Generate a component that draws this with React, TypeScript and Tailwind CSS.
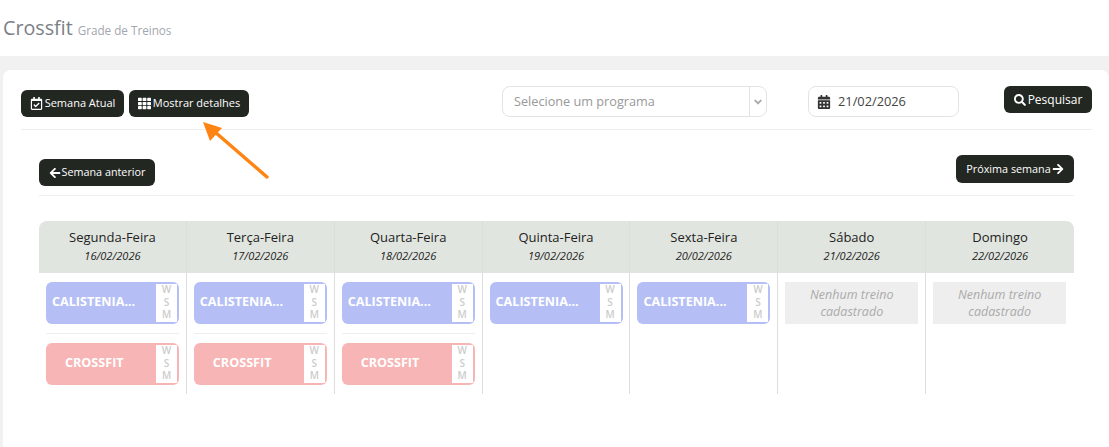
import { ReactNode } from "react";
import { FaRegCalendarCheck, FaTh, FaArrowLeft, FaArrowRight, FaSearch, FaCalendarAlt, FaAngleDown } from "react-icons/fa";

const days = [
  { name: "Segunda-Feira", date: "16/02/2026", workouts: ["c", "x"] },
  { name: "Terça-Feira", date: "17/02/2026", workouts: ["c", "x"] },
  { name: "Quarta-Feira", date: "18/02/2026", workouts: ["c", "x"] },
  { name: "Quinta-Feira", date: "19/02/2026", workouts: ["c"] },
  { name: "Sexta-Feira", date: "20/02/2026", workouts: ["c"] },
  { name: "Sábado", date: "21/02/2026", workouts: [] },
  { name: "Domingo", date: "22/02/2026", workouts: [] },
];

function DarkButton({ children, className }: { children: ReactNode; className: string }) {
  return (
    <button className={`flex items-center justify-center rounded-[6px] bg-[#232722] text-white ${className}`}>
      {children}
    </button>
  );
}

function Workout({ type }: { type: string }) {
  const isCal = type === "c";
  return (
    <div className={`flex h-[42px] w-[133px] items-center rounded-[6px] pr-[2px] ${isCal ? "bg-[#b6bff5]" : "bg-[#f7b5b5]"}`}>
      <div className={`flex-1 pb-[2px] text-[12.6px] font-bold text-white ${isCal ? "pl-[6px]" : "pl-[19px]"}`}>
        {isCal ? "CALISTENIA..." : "CROSSFIT"}
      </div>
      <div className="flex h-[38px] w-[21px] flex-col items-center justify-center bg-white pb-[2px] text-[10px] font-semibold leading-[12.5px] text-[#cccccc]">
        <span>W</span>
        <span>S</span>
        <span>M</span>
      </div>
    </div>
  );
}

export default function App() {
  return (
    <div className="relative h-[447px] overflow-hidden bg-[#f1f1f1] font-['Open_Sans',sans-serif]">
      {/* Page title */}
      <div className="flex h-[56px] items-baseline bg-white pl-[3px] pt-[13px]">
        <span className="text-[19.7px] text-[#7b7f85]">Crossfit</span>
        <span className="ml-[5px] text-[11.7px] text-[#a3a7ad]">Grade de Treinos</span>
      </div>

      <div className="mt-[14px] ml-[3px] h-[377px] rounded-t-[8px] bg-white pl-[18px] pr-[17px] pt-[16px]">
        {/* Filters */}
        <div className="flex items-start border-b border-[#eeeeee] pb-[12px]">
          <div className="mt-[4px] flex w-[481px] gap-[5px]">
            <DarkButton className="h-[27px] w-[103px] gap-[2px] text-[11px]">
              <FaRegCalendarCheck className="text-[13px]" />
              Semana Atual
            </DarkButton>
            <DarkButton className="h-[27px] w-[120px] gap-[2px] text-[11px]">
              <FaTh className="text-[13px]" />
              Mostrar detalhes
            </DarkButton>
          </div>
          <div className="flex h-[31px] w-[265px] items-center rounded-[8px] border border-[#e3e3e3] text-[12.7px] text-[#999999]">
            <span className="flex-1 pl-[11px]">Selecione um programa</span>
            <span className="flex h-full w-[17px] items-center justify-center border-l border-[#e3e3e3] text-[#aaaaaa]">
              <FaAngleDown className="text-[12px]" />
            </span>
          </div>
          <div className="ml-[41px] flex h-[31px] w-[151px] items-center gap-[7px] rounded-[8px] border border-[#e3e3e3] pl-[8px] text-[12.8px] text-[#444444]">
            <FaCalendarAlt className="text-[14px] text-[#333333]" />
            21/02/2026
          </div>
          <DarkButton className="ml-[45px] h-[27px] w-[88px] gap-[2px] text-[12px]">
            <FaSearch className="text-[12px]" />
            Pesquisar
          </DarkButton>
        </div>

        <div className="px-[18px]">
          {/* Week navigation */}
          <div className="flex items-start justify-between border-b border-[#eeeeee] pb-[9px] pt-[25px]">
            <DarkButton className="mt-[4px] h-[27px] w-[116px] gap-[1px] text-[10.8px]">
              <FaArrowLeft className="text-[12px]" />
              Semana anterior
            </DarkButton>
            <DarkButton className="h-[28px] w-[118px] gap-[1px] text-[10.8px]">
              Próxima semana
              <FaArrowRight className="text-[12px]" />
            </DarkButton>
          </div>

          {/* Week grid */}
          <div className="mt-[25px] grid grid-cols-7">
            {days.map((day, i) => (
              <div key={day.name} className={i < 6 ? "border-r border-[#dddddd]" : ""}>
                <div className={`flex h-[52px] flex-col items-center justify-center bg-[#e1e5df] pb-[1px] text-[#222222] ${i === 0 ? "rounded-tl-[8px]" : ""} ${i === 6 ? "rounded-tr-[8px]" : ""}`}>
                  <span className="text-[13px] font-medium leading-[17px]">{day.name}</span>
                  <span className="text-[11px] font-medium italic leading-[19px]">{day.date}</span>
                </div>
                <div className="h-[121px] pl-[7px] pt-[9px]">
                  {day.workouts.length === 0 && (
                    <div className="flex h-[42px] w-[133px] items-center justify-center bg-[#eeeeee] text-center text-[12.5px] italic leading-[17px] text-[#aaaaaa]">
                      Nenhum treino
                      <br />
                      cadastrado
                    </div>
                  )}
                  {day.workouts.map((w, j) => (
                    <div key={j}>
                      {j > 0 && <div className="my-[9px] h-px w-[133px] bg-[#eeeeee]" />}
                      <Workout type={w} />
                    </div>
                  ))}
                </div>
              </div>
            ))}
          </div>
        </div>
      </div>

      {/* Annotation arrow */}
      <svg className="absolute left-[195px] top-[115px]" width="85" height="70" viewBox="195 115 85 70">
        <path d="M267 177 L215 132" stroke="#ff8412" strokeWidth="3.4" strokeLinecap="round" fill="none" />
        <path d="M203 122 L222 128 L210 141 Z" fill="#ff8412" />
      </svg>
    </div>
  );
}
